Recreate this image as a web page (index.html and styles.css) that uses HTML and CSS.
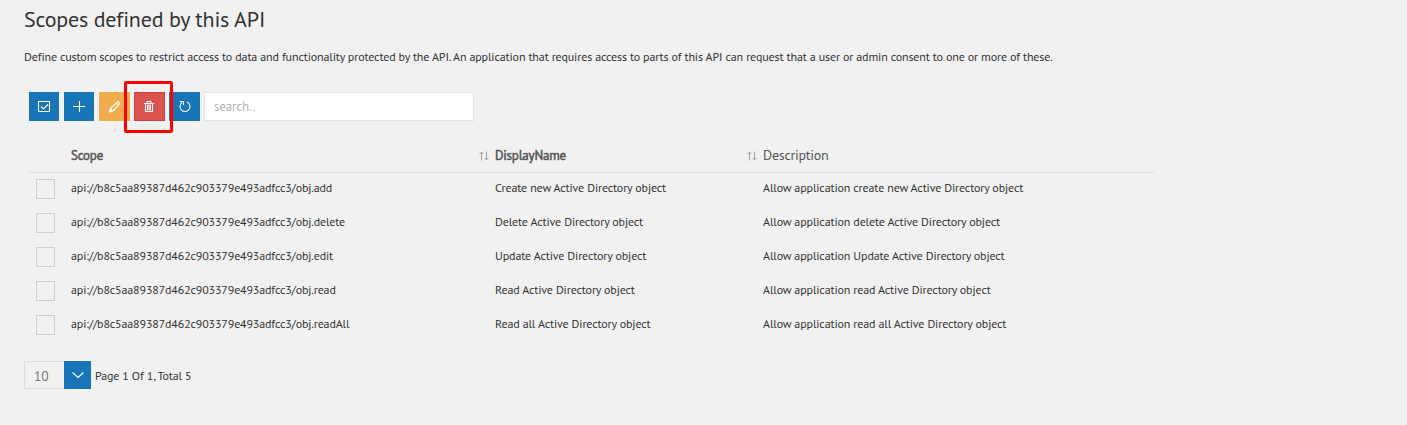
FILE: index.html
```html
<!DOCTYPE html>
<html lang="en">
<head>
<meta charset="utf-8">
<title>Scopes</title>
<link rel="stylesheet" href="styles.css">
</head>
<body>
<main class="page">
  <h1 class="title"><span>Scopes defined by this API</span></h1>
  <p class="intro"><span>Define custom scopes to restrict access to data and functionality protected by the API. An application that requires access to parts of this API can request that a user or admin consent to one or more of these.</span></p>
  <div class="toolbar">
    <button class="btn" aria-label="Select all"><svg width="14" height="14" viewBox="0 0 14 14"><path d="M1.500 1.500h11v10h-11zM4 6.500l2.500 2.500L11 4.500"/></svg></button>
    <button class="btn" aria-label="Add"><svg width="14" height="14" viewBox="0 0 14 14"><path d="M1 6.500h12M7.500 1v11"/></svg></button>
    <button class="btn edit" aria-label="Edit"><svg width="14" height="14" viewBox="0 0 14 14"><path d="M1.500 12l1-3.500 6.500-6.300q1.200-1 2.200 0t0 2.200L5 11zM2.500 8.500L5 11M8.200 3.200l2.300 2.300"/></svg></button>
    <div class="marked">
      <button class="btn delete" aria-label="Delete"><svg width="14" height="14" viewBox="0 0 14 14"><path d="M2 3.500h10M5 3V1.500h4V3M3.500 4v7.500h7V4M5.500 4.500v6M7 4.500v6M8.500 4.500v6"/></svg></button>
    </div>
    <button class="btn refresh" aria-label="Refresh"><svg width="14" height="14" viewBox="0 0 14 14"><path d="M9 1.900A5 5 0 1 1 4.200 2.400M1.800 1.500h3.700v3.500"/></svg></button>
    <input class="search" placeholder="search..">
  </div>
  <div class="table">
    <div class="row head">
      <span></span><span class="sorted">Scope</span>
      <svg class="sort" width="10" height="10" viewBox="0 0 10 10"><path d="M2.500 9.500v-8M.5 3l2-2 2 2M7.500.5v8M5.500 7l2 2 2-2"/></svg><span class="sorted">DisplayName</span>
      <svg class="sort" width="10" height="10" viewBox="0 0 10 10"><path d="M2.500 9.500v-8M.5 3l2-2 2 2M7.500.5v8M5.500 7l2 2 2-2"/></svg><span class="desc">Description</span>
    </div>
    <div class="row"><i class="check"></i><span class="scope">api://b8c5aa89387d462c903379e493adfcc3/obj.add</span><span></span><span>Create new Active Directory object</span><span></span><span>Allow application create new Active Directory object</span></div>
    <div class="row"><i class="check"></i><span class="scope">api://b8c5aa89387d462c903379e493adfcc3/obj.delete</span><span></span><span>Delete Active Directory object</span><span></span><span>Allow application delete Active Directory object</span></div>
    <div class="row"><i class="check"></i><span class="scope">api://b8c5aa89387d462c903379e493adfcc3/obj.edit</span><span></span><span>Update Active Directory object</span><span></span><span>Allow application Update Active Directory object</span></div>
    <div class="row"><i class="check"></i><span class="scope">api://b8c5aa89387d462c903379e493adfcc3/obj.read</span><span></span><span>Read Active Directory object</span><span></span><span>Allow application read Active Directory object</span></div>
    <div class="row"><i class="check"></i><span class="scope">api://b8c5aa89387d462c903379e493adfcc3/obj.readAll</span><span></span><span>Read all Active Directory object</span><span></span><span>Allow application read all Active Directory object</span></div>
  </div>
  <div class="pager">
    <div class="size">10</div>
    <button class="open" aria-label="Page size"><svg width="14" height="14" viewBox="0 0 14 14"><path d="M1.500 4.500L7 9.500l5.500-5"/></svg></button>
    <span class="info">Page 1 Of 1, Total 5</span>
  </div>
</main>
</body>
</html>
```
FILE: styles.css
```css
*, *::after { box-sizing: border-box; }
body { margin: 0; background: #f1f1f1; color: #333; font: 12px/16px "PT Sans", "Noto Sans", sans-serif; letter-spacing: -.125px; }
.page { height: 425px; padding: 3px 24px 0; overflow: hidden; white-space: nowrap; }
.title { margin: 0; font-size: 22px; line-height: 32px; font-weight: 400; letter-spacing: -.2px; }
.intro { margin: 14px 0 0; line-height: 16px; }
.toolbar { display: flex; gap: 5px; margin: 27px 0 0 5px; height: 29px; }
.btn { display: flex; align-items: center; justify-content: center; width: 30px; height: 29px; padding: 0; border: 0; background: #1876b8; }
.btn svg, .open svg { fill: none; stroke: #fff; stroke-width: 1.1; }
.btn svg { height: 15px; padding-top: 1px; }
.edit { width: 31px; }
.edit { background: #f0ad4e; }
.marked { position: relative; width: 31px; margin-left: -1px; }
.marked::after { content: ""; position: absolute; left: -10px; top: -11px; width: 49px; height: 52px; border: 3px solid #f00; border-radius: 2px; }
.delete { width: 31px; padding-right: 1px; background: #d9534f; border: 1px solid #d43f3a; }
.refresh { width: 31px; margin-left: -1px; }
.search { width: 270px; height: 29px; margin-left: -1px; padding: 0 9px; border: 1px solid #e3e3e3; background: #fff; font: 13px "PT Sans", "Noto Sans", sans-serif; letter-spacing: -.15px; }
.search::placeholder { color: #b5b5b5; }
.table { width: 1125px; margin: 18px 0 0 5px; }
.row { display: grid; grid-template-columns: 42px 407px 17px 251px 17px 1fr; align-items: center; height: 34px; padding-bottom: 4px; }
.head { height: 34px; padding: 0; border-bottom: 1px solid #ddd; color: #555; font-size: 13px; }
.sorted { letter-spacing: -.2px; -webkit-text-stroke: .5px #555; }
.sort { margin-left: 1px; fill: none; stroke: #999; stroke-width: .9; }
.desc { padding-bottom: 2px; font-size: 14px; letter-spacing: -.25px; }
.scope { letter-spacing: -.15px; }
.check { width: 19px; height: 20px; margin: 1px 0 0 7px; border: 1px solid #d2cfc8; }
.pager { display: flex; align-items: center; height: 28px; margin-top: 18px; }
.size { width: 40px; height: 28px; padding-left: 9px; border: 1px solid #ddd; border-right: 0; color: #777; font-size: 13.5px; line-height: 28px; }
.open { display: flex; align-items: center; justify-content: center; width: 27px; height: 28px; padding: 0; border: 0; background: #1876b8; }
.info { margin: 2px 0 0 4px; }
```
